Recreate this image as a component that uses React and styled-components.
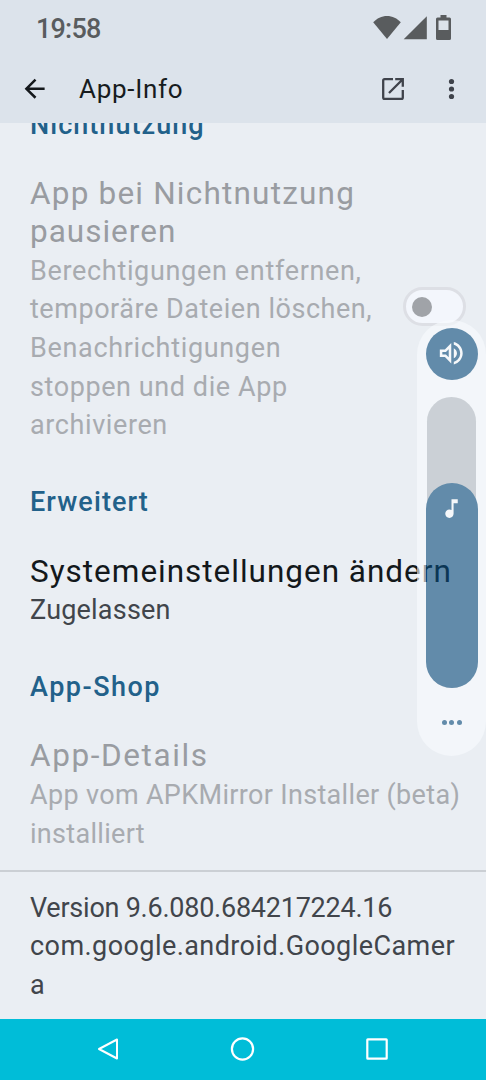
import React from 'react';
import styled, { createGlobalStyle } from 'styled-components';

const GlobalStyle = createGlobalStyle`
  body {
    margin: 0;
    background: #eaeef3;
    overflow: hidden;
  }

  * {
    box-sizing: border-box;
  }
`;

const StyledScreen = styled.div`
  display: flex;
  flex-direction: column;
  position: relative;
  width: 486px;
  height: 1080px;
  overflow: hidden;
  background: #eaeef3;
  color: #171c1e;
  font-family: Roboto, 'Liberation Sans', sans-serif;
`;

const StyledHeader = styled.header`
  flex: none;
  height: 123px;
  background: #dce3eb;
`;

const StyledStatusBar = styled.div`
  display: flex;
  align-items: center;
  justify-content: space-between;
  height: 55px;
  padding: 0 34px 0 36px;
  color: #595c5e;
`;

const StyledClock = styled.div`
  padding-top: 3px;
  font-weight: 500;
`;

const StyledStatusIcons = styled.div`
  display: flex;
  align-items: center;
`;

const StyledAppBar = styled.div`
  display: flex;
  align-items: center;
  height: 68px;
  padding: 0 19px 0 20px;
`;

const StyledAppTitle = styled.div`
  flex: 1;
  margin-left: 29px;
`;

const StyledActions = styled.div`
  display: flex;
  align-items: center;
  gap: 30px;
  color: #3f434b;
`;

const StyledContent = styled.main`
  flex: none;
  height: 747px;
  overflow: hidden;
`;

const StyledScrolled = styled.div`
  margin-top: -36.7px;
`;

const StyledCategory = styled.div`
  padding: 19.2px 30px 15.3px;
  color: #22618a;
  font-weight: 500;
`;

const StyledPreference = styled.div`
  display: flex;
  align-items: center;
  justify-content: space-between;
  padding: 15.3px 20px 19.3px 30px;
`;

const StyledLine = styled.div`
  font-size: ${({ $size }) => $size}px;
  line-height: 38.6px;
  letter-spacing: ${({ $spacing }) => $spacing || 0}px;
  white-space: nowrap;
`;

const StyledTitle = styled.div`
  color: ${({ $disabled }) => ($disabled ? '#999ca1' : '#13181b')};
`;

const StyledSummary = styled.div`
  color: ${({ $disabled }) => ($disabled ? '#a8abb0' : '#41454b')};
`;

const StyledSwitch = styled.div`
  display: flex;
  align-items: center;
  flex: none;
  width: 63px;
  height: 39px;
  margin-bottom: 6px;
  padding-left: 6px;
  border: 3px solid #dddfe5;
  border-radius: 20px;
  background: #f3f6fc;
`;

const StyledThumb = styled.span`
  width: 20px;
  height: 20px;
  border-radius: 50%;
  background: #a0a3a8;
`;

const StyledFooter = styled.footer`
  flex: 1;
  padding: 16.9px 30px 0;
  border-top: 2px solid #cbcfd4;
  color: #41454b;
`;

const StyledNavBar = styled.nav`
  display: flex;
  align-items: center;
  justify-content: space-between;
  flex: none;
  height: 61px;
  padding: 0 96px 1px 95px;
  background: #00bdd8;
`;

const StyledVolumePanel = styled.aside`
  position: absolute;
  top: 319.5px;
  right: 0;
  display: flex;
  flex-direction: column;
  align-items: center;
  width: 69px;
  height: 436.5px;
  padding-top: 8px;
  border-radius: 34.5px;
  background: #f9fcff;
  color: #fff;
  opacity: 0.6;
`;

const StyledRinger = styled.div`
  display: flex;
  align-items: center;
  justify-content: center;
  flex: none;
  width: 52px;
  height: 52px;
  border-radius: 50%;
  background: #084a7a;
`;

const StyledTrack = styled.div`
  display: flex;
  align-items: flex-end;
  justify-content: center;
  width: 49px;
  height: 291px;
  margin-top: 17px;
  border-radius: 25px;
  background: #b7bdc3;
`;

const StyledLevel = styled.div`
  flex: none;
  display: flex;
  justify-content: center;
  width: 52px;
  height: 205px;
  padding-top: 13px;
  border-radius: 26px;
  background: #084a7a;
`;

const StyledMore = styled.div`
  display: flex;
  gap: 2.5px;
  margin-top: 32px;
`;

const StyledDot = styled.span`
  width: 5px;
  height: 5px;
  border-radius: 50%;
  background: #084a7a;
`;

// a line is [text, letter spacing]
function Lines({ lines, size }) {
  return lines.map(([text, spacing]) => (
    <StyledLine key={text} $size={size} $spacing={spacing}>
      {text}
    </StyledLine>
  ));
}

function Category({ children, spacing }) {
  return (
    <StyledCategory>
      <Lines lines={[[children, spacing]]} size={27} />
    </StyledCategory>
  );
}

function Preference({ title, summary, disabled, children }) {
  return (
    <StyledPreference>
      <div>
        <StyledTitle $disabled={disabled}>
          <Lines lines={title} size={31.5} />
        </StyledTitle>
        <StyledSummary $disabled={disabled}>
          <Lines lines={summary} size={27} />
        </StyledSummary>
      </div>
      {children}
    </StyledPreference>
  );
}

function StatusBar() {
  return (
    <StyledStatusBar>
      <StyledClock>
        <Lines lines={[['19:58', -0.8]]} size={27} />
      </StyledClock>
      <StyledStatusIcons>
        <svg width="80" height="28" viewBox="372 14 80 28" fill="currentColor">
          <path d="M387 39 373.2 22.3C376.8 18.3 381.7 16 387 16s10.2 2.3 13.8 6.3z" />
          <path d="M403.7 39.2H426.8V16.2z" />
          <path
            fillRule="evenodd"
            d="M440.5 15h6v2.500h3q1.500 0 1.500 1.500v19.500q0 1.500-1.500 1.500h-12q-1.500 0-1.500-1.500V19q0-1.500 1.500-1.500h3zM438.500 20.500v9.500h10v-9.500z"
          />
        </svg>
      </StyledStatusIcons>
    </StyledStatusBar>
  );
}

function AppBar() {
  return (
    <StyledAppBar>
      <svg width="30" height="30" viewBox="0.3 0.3 24 24" fill="#15191c">
        <path d="M20 11H7.83l5.59-5.59L12 4l-8 8 8 8 1.41-1.41L7.83 13H20v-2z" />
      </svg>
      <StyledAppTitle>
        <Lines lines={[['App-Info', 0.7]]} size={26} />
      </StyledAppTitle>
      <StyledActions>
        <svg width="24" height="24" viewBox="0 0 24 24" fill="none" stroke="currentColor" strokeWidth="2.3">
          <path d="M12 2.2H3.6Q2.2 2.200 2.200 3.600V20.400Q2.200 21.800 3.600 21.800H20.400Q21.800 21.800 21.800 20.400V13" />
          <path d="M14.200 2.200H21.800V9.800M21.500 2.500 8 16" />
        </svg>
        <svg width="32" height="24" viewBox="0 0 32 24" fill="currentColor">
          <circle cx="16.500" cy="4.500" r="2.600" />
          <circle cx="16.500" cy="12" r="2.600" />
          <circle cx="16.500" cy="19.500" r="2.600" />
        </svg>
      </StyledActions>
    </StyledAppBar>
  );
}

function VolumePanel() {
  return (
    <StyledVolumePanel>
      <StyledRinger>
        <svg width="30.5" height="30.5" viewBox="0 0 24 24" fill="currentColor">
          <path d="M3 9v6h4l5 5V4L7 9H3zm7-.17v6.34L7.83 13H5v-2h2.83L10 8.83zM16.5 12c0-1.77-1.02-3.29-2.5-4.03v8.05c1.48-.73 2.5-2.25 2.5-4.02zM14 3.23v2.06c2.89.86 5 3.54 5 6.71s-2.11 5.85-5 6.71v2.06c4.01-.91 7-4.49 7-8.77s-2.99-7.86-7-8.77z" />
        </svg>
      </StyledRinger>
      <StyledTrack>
        <StyledLevel>
          <svg width="25" height="25" viewBox="0 0 24 24" fill="currentColor">
            <path d="M12 3v10.550c-.59-.34-1.27-.55-2-.55-2.210 0-4 1.790-4 4s1.790 4 4 4 4-1.790 4-4V7h4V3h-6z" />
          </svg>
        </StyledLevel>
      </StyledTrack>
      <StyledMore>
        <StyledDot />
        <StyledDot />
        <StyledDot />
      </StyledMore>
    </StyledVolumePanel>
  );
}

function NavBar() {
  return (
    <StyledNavBar>
      <svg width="26" height="26" viewBox="0 0 26 26" fill="none" stroke="#fff" strokeWidth="2">
        <path d="M22 3.500V22.500L4 13z" strokeLinejoin="round" />
      </svg>
      <svg width="26" height="26" viewBox="0 0 26 26" fill="none" stroke="#fff" strokeWidth="2.2">
        <circle cx="12.500" cy="13" r="10.600" />
      </svg>
      <svg width="26" height="26" viewBox="0 0 26 26" fill="none" stroke="#fff" strokeWidth="2.2">
        <rect x="3.300" y="3.300" width="19.400" height="19.400" rx="0.500" />
      </svg>
    </StyledNavBar>
  );
}

export default function App() {
  return (
    <StyledScreen>
      <GlobalStyle />
      <StyledHeader>
        <StatusBar />
        <AppBar />
      </StyledHeader>
      <StyledContent>
        <StyledScrolled>
          <Category spacing={1.05}>Nichtnutzung</Category>
          <Preference
            disabled
            title={[['App bei Nichtnutzung', 1.2], ['pausieren', 1]]}
            summary={[
              ['Berechtigungen entfernen,', 0.67],
              ['temporäre Dateien löschen,', 0.54],
              ['Benachrichtigungen', 0.67],
              ['stoppen und die App', 0.58],
              ['archivieren', 0.6],
            ]}
          >
            <StyledSwitch>
              <StyledThumb />
            </StyledSwitch>
          </Preference>
          <Category spacing={1.1}>Erweitert</Category>
          <Preference title={[['Systemeinstellungen ändern', 0.98]]} summary={[['Zugelassen', 0.2]]} />
          <Category spacing={1.5}>App-Shop</Category>
          <Preference
            disabled
            title={[['App-Details', 1.6]]}
            summary={[['App vom APKMirror Installer (beta)', 0.33], ['installiert', 0.3]]}
          />
        </StyledScrolled>
      </StyledContent>
      <StyledFooter>
        <Lines
          lines={[
            ['Version 9.6.080.684217224.16', -0.24],
            ['com.google.android.GoogleCamer', 0.43],
            ['a', 0],
          ]}
          size={27}
        />
      </StyledFooter>
      <NavBar />
      <VolumePanel />
    </StyledScreen>
  );
}
